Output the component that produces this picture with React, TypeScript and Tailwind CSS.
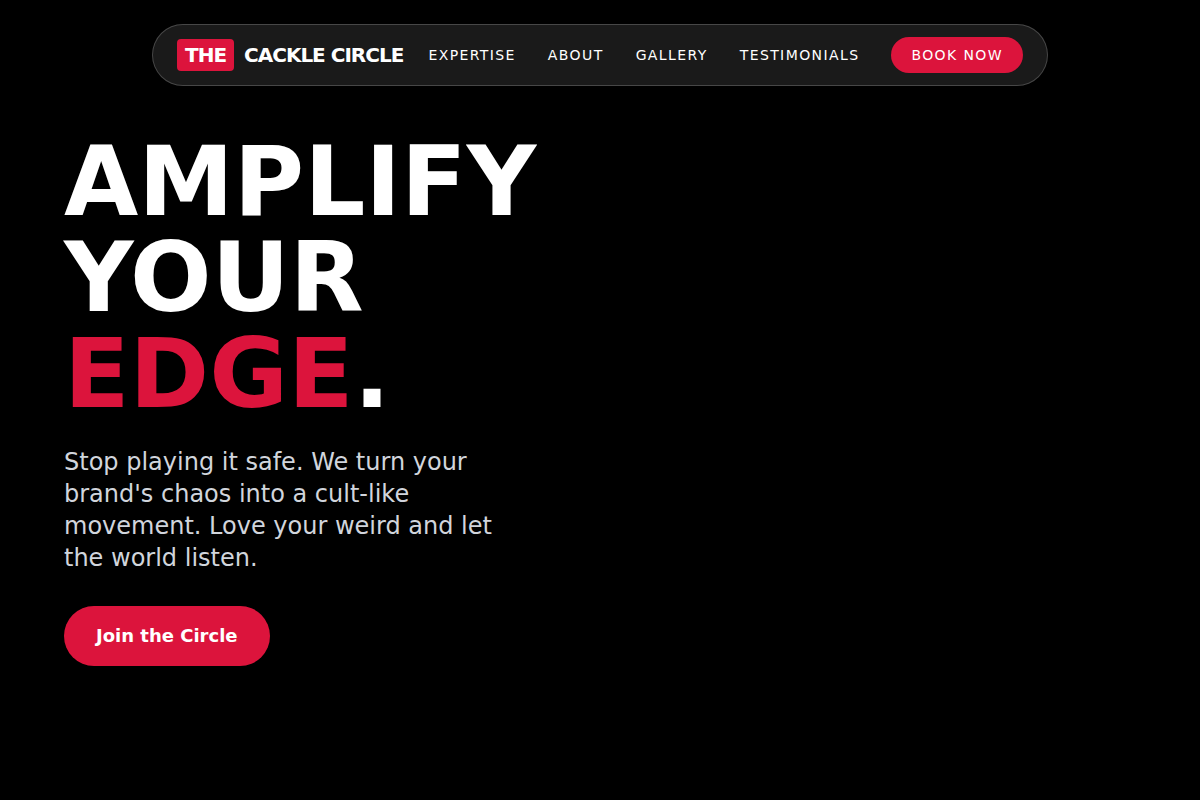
const links = ["Expertise", "About", "Gallery", "Testimonials"];

function Navbar() {
  return (
    <header className="flex justify-center pt-6">
      <nav className="flex w-full max-w-4xl items-center justify-between rounded-full border border-white/20 bg-[#1a1a1a] px-6 py-3 text-white">
        <a href="#top" className="flex items-center gap-2.5 text-xl font-bold tracking-tighter whitespace-nowrap">
          <span className="rounded-sm bg-[#dc143c] px-2 py-0.5">THE</span>
          <span>CACKLE CIRCLE</span>
        </a>
        <div className="flex items-center gap-8 text-sm tracking-widest whitespace-nowrap uppercase">
          {links.map((label) => (
            <a key={label} href={"#" + label.toLowerCase()}>
              {label}
            </a>
          ))}
          <a href="#book" className="rounded-full bg-[#dc143c] px-5 py-2">
            Book Now
          </a>
        </div>
      </nav>
    </header>
  );
}

export default function App() {
  return (
    <div id="top" className="min-h-screen bg-black font-['DejaVu_Sans',sans-serif]">
      <Navbar />
      <main className="px-16 pt-12">
        <section className="flex max-w-lg flex-col items-start">
          <h1 className="text-8xl leading-none font-bold text-white">
            AMPLIFY
            <br />
            YOUR
            <br />
            <span className="text-[#dc143c]">EDGE</span>.
          </h1>
          <p className="mt-6 max-w-md text-2xl text-gray-300">
            Stop playing it safe. We turn your brand's chaos into a cult-like movement. Love your weird and let the
            world listen.
          </p>
          <button type="button" className="mt-8 rounded-full bg-[#dc143c] px-8 py-4 text-lg font-bold text-white">
            Join the Circle
          </button>
        </section>
      </main>
    </div>
  );
}
